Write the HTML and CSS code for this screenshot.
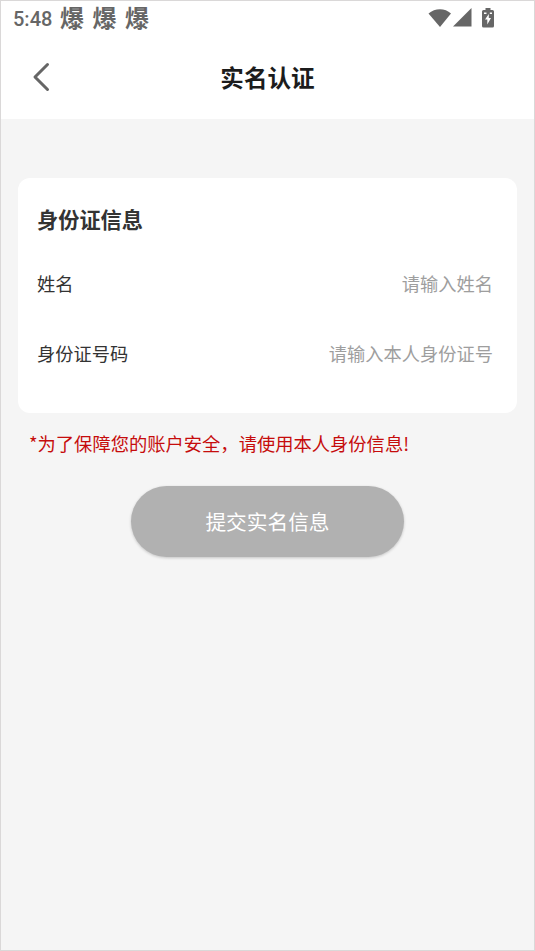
FILE: index.html
```html
<!DOCTYPE html>
<html lang="zh-CN">
<head>
<meta charset="utf-8">
<title>实名认证</title>
<link rel="stylesheet" href="styles.css">
</head>
<body>
<div class="screen">
  <div class="status">
    <span class="time">5:48</span>
    <span class="notice">爆</span><span class="notice">爆</span><span class="notice">爆</span>
    <div class="indicators">
      <svg class="wifi" width="24" height="20" viewBox="0 0 24 20"><path d="M.5 5.500C7 -.3 17 -.3 23 5.500L12 19Z"/></svg>
      <svg class="signal" width="19" height="19" viewBox="0 0 19 19"><path d="M18.500 0V18.500H0Z"/></svg>
      <svg class="battery" width="12" height="20" viewBox="0 0 12 20"><path fill-rule="evenodd" d="M3.500 0H8.500V2H10.500Q12 2 12 3.500V18Q12 19.500 10.500 19.500H1.500Q0 19.500 0 18V3.500Q0 2 1.500 2H3.500ZM6.800 6L3 11.500H5.300V16.500L9 10H6.800ZM2 4.500V6H4.500V4.500ZM7.800 4.500V6H10V4.500Z"/></svg>
    </div>
  </div>
  <header class="nav">
    <svg class="back" width="18" height="30" viewBox="0 0 18 30"><path d="M15.500 2.500L3 15L15.500 27.500"/></svg>
    <h1 class="title">实名认证</h1>
  </header>
  <main class="content">
    <section class="card">
      <h2 class="heading">身份证信息</h2>
      <div class="row"><label for="name">姓名</label><input id="name" placeholder="请输入姓名"></div>
      <div class="row"><label for="idno">身份证号码</label><input id="idno" placeholder="请输入本人身份证号"></div>
    </section>
    <p class="warning">*为了保障您的账户安全，请使用本人身份信息!</p>
    <button class="submit">提交实名信息</button>
  </main>
</div>
</body>
</html>
```
FILE: styles.css
```css
* { box-sizing: border-box; }
body {
  margin: 0;
  font-family: Roboto, "Noto Sans CJK SC", sans-serif;
}
.screen {
  height: 951px;
  border: 1px solid #dad8d8;
  background: #f5f5f5;
  display: flex;
  flex-direction: column;
  overflow: hidden;
}
.status {
  height: 36px;
  padding-left: 12px;
  background: #fff;
  color: #666;
  display: flex;
  align-items: center;
}
.time {
  font-size: 20px;
  font-weight: 500;
  line-height: 36px;
  width: 47px;
}
.notice {
  width: 32.500px;
  font-size: 24px;
  font-weight: 700;
  line-height: 34px;
}
.indicators {
  margin: 0 40px 3px auto;
  display: flex;
  align-items: center;
  fill: #666;
}
.wifi { margin-right: 1px; }
.battery { margin-left: 10px; }
.nav {
  height: 82px;
  padding-bottom: 2px;
  background: #fff;
  display: grid;
  grid-template-columns: 32px 1fr 32px;
  align-items: center;
}
.back {
  margin-left: 31px;
  fill: none;
  stroke: #666;
  stroke-width: 3;
  stroke-linecap: round;
  stroke-linejoin: round;
}
.title {
  margin: 0;
  font-size: 23.600px;
  font-weight: 700;
  text-align: center;
  color: #1c1c1c;
}
.content {
  padding: 59px 17px 0;
  display: flex;
  flex-direction: column;
}
.card {
  height: 235px;
  padding: 22px 24px 0 19px;
  border-radius: 12px;
  background: #fff;
}
.heading {
  margin: 0 0 6px;
  font-size: 21.200px;
  line-height: 42px;
  font-weight: 700;
  color: #333;
}
.row {
  height: 70px;
  display: flex;
  align-items: center;
  justify-content: space-between;
  font-size: 18.250px;
  color: #333;
}
.row input {
  flex: 1;
  min-width: 0;
  padding: 2px 0 0;
  border: 0;
  background: none;
  font: inherit;
  text-align: right;
}
.row input::placeholder { color: #9e9e9e; }
.warning {
  margin: 12px 0 0 11px;
  font-family: "Noto Sans CJK SC", sans-serif;
  font-size: 18.300px;
  line-height: 36px;
  color: #c60c0c;
  white-space: nowrap;
}
.submit {
  align-self: center;
  width: 273px;
  height: 71px;
  margin-top: 25px;
  padding: 0 0 2px;
  border: 0;
  border-radius: 36px;
  background: #b1b1b1;
  box-shadow: 0 1px 3px rgba(0, 0, 0, 0.2);
  color: #fff;
  font: 20.700px Roboto, "Noto Sans CJK SC", sans-serif;
}
```
